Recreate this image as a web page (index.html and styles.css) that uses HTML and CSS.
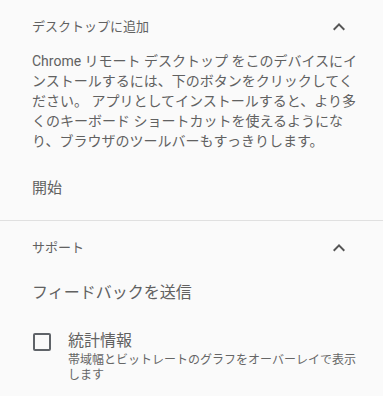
FILE: index.html
```html
<!DOCTYPE html>
<html lang="ja">
<head>
    <meta charset="UTF-8">
    <title>Chrome リモート デスクトップ</title>
    <link rel="stylesheet" href="styles.css">
</head>
<body>

    <section class="panel">
        <div class="panel-head">
            <h2 class="panel-title">デスクトップに追加</h2>
            <button class="toggle" aria-label="閉じる">
                <svg viewBox="0 0 24 24" width="24" height="24"><path d="M12 8l-6 6 1.41 1.41L12 10.83l4.59 4.58L18 14z"/></svg>
            </button>
        </div>
        <p class="install-text">Chrome リモート デスクトップ をこのデバイスにインストールするには、下のボタンをクリックしてください。 アプリとしてインストールすると、より多くのキーボード ショートカットを使えるようになり、ブラウザのツールバーもすっきりします。</p>
        <button class="text-btn start-btn">開始</button>
    </section>

    <section class="panel support">
        <div class="panel-head">
            <h2 class="panel-title">サポート</h2>
            <button class="toggle" aria-label="閉じる">
                <svg viewBox="0 0 24 24" width="24" height="24"><path d="M12 8l-6 6 1.41 1.41L12 10.83l4.59 4.58L18 14z"/></svg>
            </button>
        </div>
        <button class="text-btn feedback-btn">フィードバックを送信</button>

        <label class="check-row">
            <span class="checkbox"></span>
            <span class="check-label">
                <span class="check-title">統計情報</span>
                <span class="check-sub">帯域幅とビットレートのグラフをオーバーレイで表示します</span>
            </span>
        </label>
    </section>

</body>
</html>
```

FILE: styles.css
```css
body {
    margin: 0;
    background-color: #fafafa;
    color: #5f6368;
    font-family: Roboto, "Noto Sans CJK JP", sans-serif;
}

.panel {
    padding: 0 21px 0 32px;
}

.panel.support {
    border-top: 1px solid #e0e0e0;
}

.panel-head {
    display: flex;
    justify-content: space-between;
    align-items: center;
    height: 50px;
    margin-right: 11px;
}

.panel-title {
    margin: 0;
    font-size: 13px;
    font-weight: normal;
    color: #616161;
}

.toggle {
    width: 24px;
    height: 24px;
    margin-top: 4px;
    padding: 0;
    border: none;
    background: none;
    cursor: pointer;
}

.toggle svg {
    display: block;
    fill: #555;
}

.install-text {
    margin: 1px 0 0;
    font-size: 14px;
    line-height: 20px;
    color: #616161;
}

.text-btn {
    display: block;
    padding: 0;
    border: none;
    background: none;
    font-family: inherit;
    color: #616161;
    text-align: left;
    cursor: pointer;
}

.start-btn {
    height: 36px;
    margin: 17px 0 16px;
    font-size: 15px;
}

.feedback-btn {
    height: 40px;
    font-size: 16px;
}

.check-row {
    display: flex;
    gap: 17px;
    margin-top: 20px;
    padding-bottom: 14px;
    cursor: pointer;
}

.checkbox {
    flex: none;
    width: 14px;
    height: 14px;
    margin: 2px 0 0 1px;
    border: 2px solid #5f6368;
    border-radius: 2px;
}

.check-label {
    display: flex;
    flex-direction: column;
}

.check-title {
    font-size: 16px;
    line-height: 20px;
    color: #616161;
}

.check-sub {
    margin-top: 2px;
    font-size: 12px;
    line-height: 15px;
    color: #666;
}
```
